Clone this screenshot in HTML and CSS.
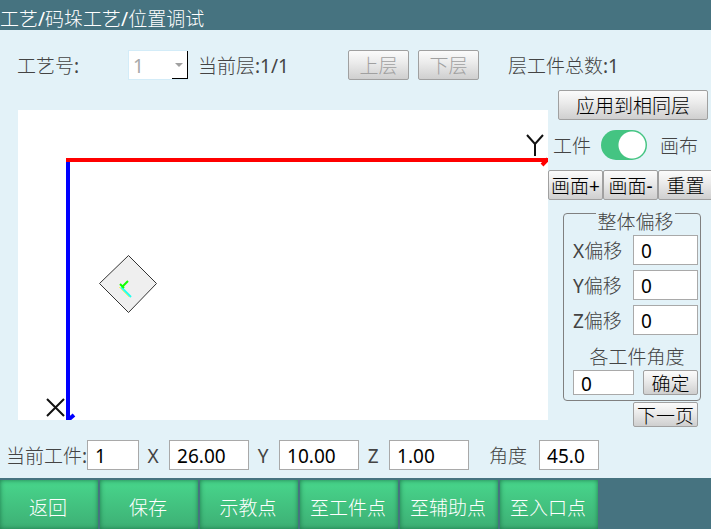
FILE: index.html
```html
<!DOCTYPE html>
<html lang="zh-CN">
<head>
<meta charset="utf-8">
<title>位置调试</title>
<link rel="stylesheet" href="styles.css">
</head>
<body>
<header class="titlebar">工艺/码垛工艺/位置调试</header>

<section class="toolbar">
  <label class="process-label" for="process">工艺号:</label>
  <span class="process-box">
    <select id="process" class="process" disabled><option>1</option></select>
    <svg class="process-arrow" viewBox="0 0 8 4" aria-hidden="true"><path d="M0 0H8L4 4Z"/></svg>
  </span>
  <span class="layer">当前层:1/1</span>
  <button class="btn btn-layer" disabled>上层</button>
  <button class="btn btn-layer" disabled>下层</button>
  <span class="total">层工件总数:1</span>
</section>

<main class="main">
  <div class="canvas">
    <svg class="plot" viewBox="0 0 530 310" preserveAspectRatio="xMinYMin slice" role="img" aria-label="工件位置">
      <path class="axis-y" d="M48 50H530M524 55L530 49"/>
      <path class="axis-x" d="M50 52V310M50 310L56 305"/>
      <path class="mark" d="M509 25L517 34L525 25M517 34V46"/>
      <path class="mark" d="M29 289L46 306M46 289L29 306"/>
      <path class="piece" d="M110.500 145.500L138.500 173.500L110.500 202.500L81.500 173.500Z"/>
      <path class="tick-yellow" d="M101 177L111 187"/>
      <path class="tick-cyan" d="M103 177L113 187"/>
      <path class="tick-green" d="M104 177L110 171M102 174L106 178"/>
    </svg>
  </div>

  <aside class="side">
    <button class="btn btn-apply">应用到相同层</button>
    <div class="mode">
      <label for="mode">工件</label>
      <input id="mode" class="switch" type="checkbox" checked>
      <label for="mode">画布</label>
    </div>
    <div class="zoom">
      <button class="btn">画面+</button>
      <button class="btn">画面-</button>
      <button class="btn">重置</button>
    </div>
    <fieldset class="offsets">
      <legend>整体偏移</legend>
      <div class="offset"><label for="ox">X偏移</label><input id="ox" class="field" value="0"></div>
      <div class="offset"><label for="oy">Y偏移</label><input id="oy" class="field" value="0"></div>
      <div class="offset"><label for="oz">Z偏移</label><input id="oz" class="field" value="0"></div>
      <label class="angle-label" for="angles">各工件角度</label>
      <div class="angle">
        <input id="angles" class="field" value="0">
        <button class="btn">确定</button>
      </div>
    </fieldset>
    <button class="btn btn-next">下一页</button>
  </aside>
</main>

<section class="current">
  <label for="cur">当前工件:</label><input id="cur" class="field field-index" value="1">
  <label class="axis" for="cx">X</label><input id="cx" class="field field-pos" value="26.00">
  <label class="axis" for="cy">Y</label><input id="cy" class="field field-pos" value="10.00">
  <label class="axis" for="cz">Z</label><input id="cz" class="field field-pos" value="1.00">
  <label class="rotation" for="ca">角度</label><input id="ca" class="field field-angle" value="45.0">
</section>

<nav class="actions">
  <button class="action">返回</button>
  <button class="action">保存</button>
  <button class="action">示教点</button>
  <button class="action">至工件点</button>
  <button class="action">至辅助点</button>
  <button class="action">至入口点</button>
</nav>
</body>
</html>
```
FILE: styles.css
```css
* { box-sizing: border-box; }

body {
  display: flex;
  flex-direction: column;
  min-height: 100vh;
  margin: 0;
  overflow: hidden;
  background: #e3f2f8;
  color: #444;
  font: 400 19px/26px "Noto Sans", "Noto Sans CJK SC Light", "Noto Sans CJK SC", sans-serif;
  white-space: nowrap;
}

button, input, select { margin: 0; font: inherit; color: #000; }
label, .layer, .total { padding-top: 2px; }

.titlebar {
  padding: 6px 0 0;
  height: 30px;
  line-height: 26px;
  background: #467380;
  color: #fff;
}

.toolbar {
  display: flex;
  align-items: center;
  height: 60px;
  padding: 10px 0 0 17px;
}
.process-label { width: 111px; }
.process-box { position: relative; display: flex; width: 60px; height: 30px; margin-right: 10px; }
.process {
  appearance: none;
  width: 100%;
  padding: 2px 4px 0;
  border: 1px solid #d3ecf8;
  border-width: 1px 0 1px 1px;
  border-radius: 0;
  background:
    linear-gradient(#000, #000) right bottom / 1px 100% no-repeat,
    linear-gradient(#000, #000) right bottom / 16px 1px no-repeat,
    #fff;
  color: #a8a8a8;
  opacity: 1;
}
.process-arrow { position: absolute; right: 5px; top: 13px; width: 8px; height: 4px; fill: #a0a0a0; }
.layer { width: 150px; }

.btn {
  height: 30px;
  padding: 2px 0 0;
  border: 1px solid #a0a0a0;
  border-radius: 2px;
  background: linear-gradient(#fbfbfb, #ececec 40%, #cfcfcf);
  line-height: 26px;
}
.btn:disabled { color: #a0a0a0; }
.btn-layer { width: 61px; margin-right: 9px; }
.total { margin-left: 20px; }

.main { display: flex; }
.canvas { flex: 1; height: 310px; margin: 20px 0 0 18px; background: #fff; }
.plot { display: block; width: 100%; height: 100%; fill: none; }
.axis-y { stroke: #f00; stroke-width: 4; }
.axis-x { stroke: #00f; stroke-width: 4; }
.mark { stroke: #111; stroke-width: 2; }
.piece { fill: #efefef; stroke: #333; stroke-width: 1; }
.tick-cyan { stroke: #2fe; stroke-width: 2; }
.tick-yellow { stroke: #fe6; stroke-width: 1; }
.tick-green { stroke: #1f0; stroke-width: 2; }

.side { display: flex; flex-direction: column; width: 163px; }
.btn-apply { align-self: flex-end; width: 150px; margin-right: 3px; }
.mode { display: flex; align-items: center; gap: 10px; height: 30px; margin: 10px 0; padding-left: 5px; }
.mode label:last-child { margin-left: 3px; }
.switch {
  appearance: none;
  width: 46px;
  height: 30px;
  border-radius: 15px;
  background: radial-gradient(circle at 31px 15px, #fff 13px, #44c482 14px);
}
.zoom { display: grid; grid-template-columns: repeat(3, 55px); }

.offsets {
  min-width: 0;
  height: 193px;
  margin: 8px 10px 0 15px;
  padding: 17px 2px 0 9px;
  border: 1px solid #808080;
  border-radius: 4px;
}
.offsets legend { height: 10px; margin: 0 auto; padding: 0 1px; line-height: 28px; }
.offset { display: flex; justify-content: space-between; align-items: center; height: 30px; margin-bottom: 5px; }
.offset .field { width: 65px; }
.angle-label { display: block; height: 30px; padding-left: 3px; text-align: center; line-height: 30px; }
.angle { display: flex; justify-content: space-between; }
.angle .field { width: 61px; height: 25px; }
.angle .btn { width: 55px; height: 25px; line-height: 22px; }
.btn-next { align-self: flex-end; width: 65px; height: 25px; margin: 1px 13px 0 0; line-height: 22px; }

.field {
  height: 30px;
  padding: 2px 7px 0;
  border: 1px solid #a9a9a9;
  border-radius: 0;
  background: #fff;
}

.current { display: flex; align-items: center; height: 30px; margin: 13px 0 8px; padding-left: 6px; }
.field-index { width: 52px; }
.field-pos { width: 80px; }
.field-angle { width: 60px; }
.axis { width: 30px; padding-right: 2px; text-align: center; }
.rotation { width: 70px; text-align: center; padding-left: 8px; }

.actions {
  display: grid;
  flex: 1;
  grid-template-columns: repeat(6, 98px);
  gap: 2px;
  padding-top: 2px;
  background: #467380;
}
.action {
  padding: 6px 2px 0 0;
  border: 0;
  background: linear-gradient(#48d68c, #3daf74);
  box-shadow: inset 0 0 5px #1f7a4c;
  color: #fff;
}
```
